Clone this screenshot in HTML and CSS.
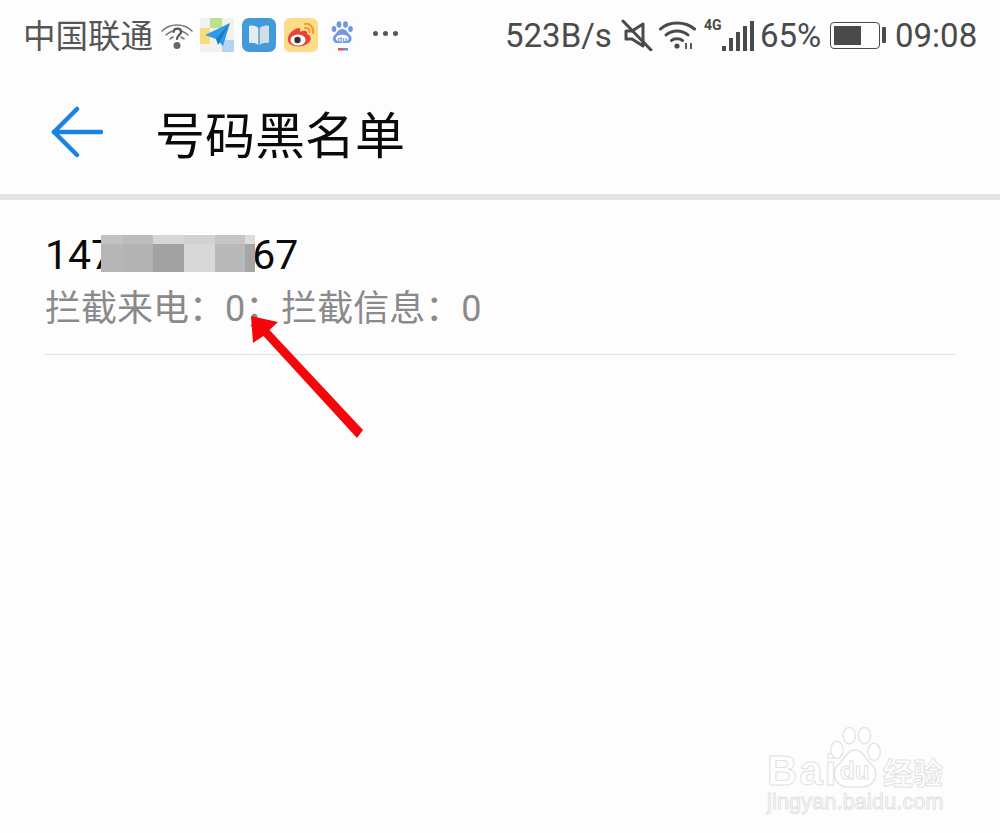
FILE: index.html
```html
<!DOCTYPE html>
<html lang="zh-CN">
<head>
    <meta charset="UTF-8">
    <title>号码黑名单</title>
    <link rel="stylesheet" href="styles.css">
</head>
<body>
    <div class="phone">
        <div class="status-bar">
            <div class="status-left">
                <span class="carrier">中国联通</span>
                <svg class="ic-hotspot" width="32" height="28" viewBox="0 0 32 28" fill="none" stroke="#777" stroke-width="1.600" stroke-linecap="round">
                    <path d="M1 9C9 1 23 1 31 9"/>
                    <path d="M5 13C7 11 9 10 11 9.200"/>
                    <path d="M27 13C25 11 23 10 21 9.200"/>
                    <path d="M9 17C10 16 11 15.500 12 15"/>
                    <path d="M23 17C22 16 21 15.500 20 15"/>
                    <path d="M12.500 10C13 5.500 20 5.500 20 10C20 13 16 13 16 17" stroke="#555" stroke-width="2.200"/>
                    <circle cx="16" cy="23.500" r="3.500" fill="#666" stroke="none"/>
                </svg>
                <svg class="app-ic" width="34" height="34" viewBox="0 0 34 34">
                    <rect width="34" height="34" fill="#f1f1ef"/>
                    <rect x="10" width="12" height="10" fill="#b9e28e"/>
                    <rect y="10" width="10" height="16" fill="#f8dd7c"/>
                    <rect x="22" y="22" width="12" height="12" fill="#b5d4f2"/>
                    <path d="M5 17L30 5L23 28L16 21Z" fill="#2f9be6"/>
                    <path d="M16 21L30 5L18 27Z" fill="#1b7cc6"/>
                </svg>
                <svg class="app-ic" width="34" height="34" viewBox="0 0 34 34">
                    <rect width="34" height="34" rx="7" fill="#429bd8"/>
                    <path d="M7 8C11 7 14 8 16.300 10V27C14 25 11 24.500 7 25Z" fill="#e6edf2"/>
                    <path d="M27 8C23 7 20 8 17.700 10V27C20 25 23 24.500 27 25Z" fill="#d3dde5"/>
                </svg>
                <svg class="app-ic" width="34" height="34" viewBox="0 0 34 34" fill="none">
                    <rect width="34" height="34" rx="6" fill="#fbdc87"/>
                    <path d="M14 10C7 12 3 18 4 23C6 29 17 30 23 26C29 22 27 17 23 16C24 12 20 12 16 14C17 11 16 10 14 10Z" fill="#e8423c"/>
                    <ellipse cx="14" cy="22" rx="7.500" ry="5.500" fill="#fff"/>
                    <circle cx="13.500" cy="22" r="3.200" fill="#333"/>
                    <path d="M21 6C26 5 30 9 29 15M21 10C24 9.500 26 11.500 25.500 14" stroke="#ef9a32" stroke-width="2" stroke-linecap="round"/>
                </svg>
                <svg class="app-ic" width="32" height="34" viewBox="0 0 32 34">
                    <rect width="32" height="34" rx="6" fill="#fcfcfe"/>
                    <g fill="#6f97e6">
                        <ellipse cx="8" cy="11" rx="2.300" ry="3"/>
                        <ellipse cx="13" cy="6.500" rx="2.400" ry="3.200"/>
                        <ellipse cx="19.500" cy="6.500" rx="2.400" ry="3.200"/>
                        <ellipse cx="24.500" cy="11" rx="2.300" ry="3"/>
                        <path d="M16 11C12 11 11 15 8.500 17C5.500 20 7 25 11 25H21.500C25.500 25 27 20 24 17C21.500 15 20.500 11 16 11Z"/>
                    </g>
                    <ellipse cx="16.200" cy="20.500" rx="6.500" ry="3.800" fill="#fff"/>
                    <text class="du-tiny" x="16.200" y="23.500" text-anchor="middle">du</text>
                    <rect x="12" y="30" width="5" height="2.500" fill="#e0534c"/>
                    <rect x="17" y="30" width="5" height="2.500" fill="#6d92e0"/>
                </svg>
                <div class="more-dots"><i></i><i></i><i></i></div>
            </div>
            <div class="status-right">
                <span class="net-speed">523B/s</span>
                <svg class="ic-mute" width="32" height="32" viewBox="0 0 32 32" fill="none" stroke="#4a4a4a" stroke-width="3">
                    <path d="M5 12H11L22 5V27L11 20H5Z" stroke-linejoin="round"/>
                    <path d="M2 2L30 31" stroke-linecap="round"/>
                </svg>
                <svg class="ic-wifi" width="38" height="30" viewBox="0 0 38 30" fill="none" stroke="#4a4a4a" stroke-width="3" stroke-linecap="round">
                    <path d="M1.500 9C10 1 26 1 35.500 9"/>
                    <path d="M7 15C13 9.500 23 9.500 29 15"/>
                    <path d="M12.500 20.500C15 18 21 18 23.500 20.500"/>
                    <circle cx="18" cy="26" r="2.600" fill="#4a4a4a" stroke="none"/>
                    <path d="M27 23V29M32 23V29" stroke-width="1.800" stroke-linecap="butt"/>
                </svg>
                <div class="cell">
                    <span class="net-type">4G</span>
                    <div class="bars"><i class="b1"></i><i class="b2"></i><i class="b3"></i><i class="b4"></i><i class="b5"></i></div>
                </div>
                <span class="batt-pct">65%</span>
                <div class="battery">
                    <div class="battery-body"><div class="battery-fill"></div></div>
                    <div class="battery-nub"></div>
                </div>
                <span class="clock">09:08</span>
            </div>
        </div>

        <div class="title-bar">
            <svg class="back" width="52" height="52" viewBox="0 0 52 52" fill="none" stroke="#1a82e2" stroke-width="4.500" stroke-linecap="round" stroke-linejoin="round">
                <path d="M26 3L3 26L26 49"/>
                <path d="M3 26H50"/>
            </svg>
            <h1>号码黑名单</h1>
        </div>

        <div class="list">
            <div class="list-item">
                <div class="number">147<span class="hidden-digits"></span>67</div>
                <div class="counts">拦截来电：0；拦截信息：0</div>
                <div class="mosaic">
                    <i style="background:#c2c2c2"></i><i style="background:#bcbcbc"></i><i style="background:#d6d6d6"></i><i style="background:#d2d2d2"></i><i style="background:#c6c6c6"></i><i style="background:#dcdcdc"></i>
                    <i style="background:#b6b6b6"></i><i style="background:#b3b3b3"></i><i style="background:#a2a2a2"></i><i style="background:#d8d8d8"></i><i style="background:#b9b9b9"></i><i style="background:#a6a6a6"></i>
                </div>
            </div>
        </div>

        <svg class="red-arrow" width="130" height="130" viewBox="0 0 130 130">
            <path d="M1 6L28 12L19.500 20L113 120L107 128L13.500 26L3 33Z" fill="#f4060a"/>
        </svg>

        <div class="watermark">
            <div class="wm-top">
                <span class="wm-logo">Bai</span>
                <div class="wm-paw">
                    <svg width="56" height="63" viewBox="0 0 56 66" fill="#fff" stroke="#e4e4e4" stroke-width="1.500">
                        <ellipse cx="9" cy="24" rx="6.500" ry="9"/>
                        <ellipse cx="22" cy="9" rx="6.500" ry="8.500"/>
                        <ellipse cx="38" cy="9" rx="6.500" ry="8.500"/>
                        <ellipse cx="48" cy="26" rx="6.500" ry="9"/>
                        <path d="M28 24C20 24 17 34 10 40C3 47 6 62 20 63H36C50 62 53 47 46 40C39 34 36 24 28 24Z"/>
                    </svg>
                    <span class="wm-du">du</span>
                </div>
                <span class="wm-cn">经验</span>
            </div>
            <div class="wm-url">jingyan.baidu.com</div>
        </div>
    </div>
</body>
</html>
```

FILE: styles.css
```css
* {
    box-sizing: border-box;
}

html, body {
    margin: 0;
    padding: 0;
    background-color: #fdfdfd;
}

.phone {
    position: relative;
    width: 1000px;
    height: 833px;
    overflow: hidden;
    background-color: #fdfdfd;
    font-family: Roboto, "Noto Sans CJK SC", sans-serif;
}

/* status bar */
.status-bar {
    display: flex;
    justify-content: space-between;
    align-items: center;
    height: 70px;
    padding: 0 23px 0 25px;
    color: #4a4a4a;
    font-size: 33px;
}

.status-left, .status-right {
    display: flex;
    align-items: center;
}

.carrier {
    width: 132px;
    margin-left: -2px;
    margin-bottom: 3px;
    font-family: "Noto Sans CJK SC", sans-serif;
    font-size: 32.500px;
    line-height: 40px;
    white-space: nowrap;
    color: #555;
}

.ic-hotspot {
    margin-left: 6px;
    margin-top: 2px;
}

.app-ic {
    margin-left: 8px;
    flex: none;
}

.ic-hotspot + .app-ic {
    margin-left: 7px;
}

.du-tiny {
    font-family: "Liberation Sans", sans-serif;
    font-size: 8px;
    font-weight: 700;
    fill: #6f97e6;
}

.more-dots {
    display: flex;
    gap: 5px;
    margin-left: 15px;
    margin-bottom: 3px;
}

.more-dots i {
    width: 5px;
    height: 5px;
    border-radius: 50%;
    background-color: #555;
}

.net-speed {
    width: 105px;
    margin-left: -1px;
    white-space: nowrap;
}

.ic-mute {
    margin-left: 11px;
}

.ic-wifi {
    margin-left: 6px;
}

.cell {
    position: relative;
    width: 50px;
    height: 32px;
    margin-left: 7px;
    display: flex;
    justify-content: flex-end;
    align-items: flex-end;
}

.net-type {
    position: absolute;
    left: 0;
    top: -2px;
    font-size: 14px;
    line-height: 16px;
    font-weight: 700;
}

.bars {
    display: flex;
    align-items: flex-end;
    gap: 3px;
}

.bars i {
    width: 4px;
    background-color: #4a4a4a;
}

.bars .b1 { height: 5px; }
.bars .b2 { height: 13px; }
.bars .b3 { height: 19px; }
.bars .b4 { height: 25px; }
.bars .b5 { height: 30px; }

.batt-pct {
    margin-left: 6px;
    width: 61px;
    white-space: nowrap;
}

.battery {
    display: flex;
    align-items: center;
    margin-left: 9px;
}

.battery-body {
    width: 50px;
    height: 27px;
    padding: 3px;
    border: 1.500px solid #4a4a4a;
    border-radius: 4px;
}

.battery-fill {
    width: 65%;
    height: 100%;
    background-color: #4a4a4a;
}

.battery-nub {
    width: 4px;
    height: 16px;
    margin-left: 2px;
    border-radius: 1px;
    background-color: #4a4a4a;
}

.clock {
    margin-left: 9px;
    width: 82px;
    white-space: nowrap;
}

/* title */
.title-bar {
    display: flex;
    align-items: center;
    height: 130px;
    padding: 0 0 0 51px;
    border-bottom: 6px solid #e4e4e4;
}

.title-bar h1 {
    margin: 0 0 0 52px;
    font-family: "Noto Sans CJK SC", sans-serif;
    font-size: 50px;
    font-weight: 400;
    line-height: 60px;
    color: #0a0a0a;
}

.back {
    flex: none;
}

/* list */
.list-item {
    position: relative;
    margin: 0 44px;
    padding-top: 30px;
    height: 155px;
    border-bottom: 1.500px solid #e2e2e2;
}

.number {
    display: flex;
    padding-left: 1px;
    font-size: 41px;
    line-height: 50px;
    color: #0a0a0a;
}

.hidden-digits {
    width: 138px;
}

.counts {
    margin-top: 4px;
    padding-left: 1px;
    font-size: 36px;
    line-height: 50px;
    color: #8a8a8a;
    white-space: pre;
}

.mosaic {
    position: absolute;
    left: 57px;
    top: 35px;
    display: grid;
    grid-template-columns: 22px 30px 31px 31px 30px 10px;
    grid-template-rows: 9px 28px;
}

.red-arrow {
    position: absolute;
    left: 250px;
    top: 310px;
}

/* watermark */
.watermark {
    position: absolute;
    left: 767px;
    top: 727px;
    width: 180px;
    color: #fff;
    -webkit-text-stroke: 1px #e2e2e2;
}

.wm-top {
    display: flex;
    align-items: flex-end;
    height: 63px;
}

.wm-logo {
    font-family: "Liberation Sans", sans-serif;
    font-size: 42px;
    font-weight: 700;
    line-height: 38px;
    width: 60px;
    letter-spacing: 2px;
}

.wm-paw {
    position: relative;
    width: 56px;
    height: 63px;
    flex: none;
}

.wm-paw svg {
    display: block;
}

.wm-du {
    position: absolute;
    left: 13px;
    top: 32px;
    font-family: "Liberation Sans", sans-serif;
    font-size: 24px;
    line-height: 24px;
    font-weight: 700;
}

.wm-cn {
    font-family: "Noto Sans CJK SC", sans-serif;
    font-size: 30px;
    line-height: 34px;
    font-weight: 700;
    white-space: nowrap;
    margin-bottom: 2px;
}

.wm-url {
    font-family: "Liberation Sans", sans-serif;
    font-size: 21.500px;
    line-height: 24px;
    letter-spacing: 0.200px;
    white-space: nowrap;
}
```
